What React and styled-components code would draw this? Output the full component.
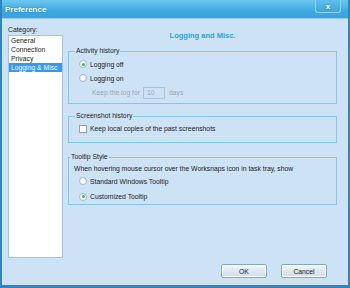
import React from "react";
import styled, { createGlobalStyle } from "styled-components";

const Global = createGlobalStyle`
  html, body { margin: 0; padding: 0; background: #ffffff; }
  body { font-family: "Liberation Sans", Arial, sans-serif; }
`;

const Window = styled.div`
  width: 350px;
  height: 288px;
  box-sizing: border-box;
  display: flex;
  flex-direction: column;
  background: #cde3f5;
  border-left: 2px solid #2f86bd;
  border-right: 2px solid #2f86bd;
  border-bottom: 3px solid #2f86bd;
  font-size: 6.8px;
  color: #1a1a1a;
`;

const TitleBar = styled.div`
  height: 18px;
  flex: none;
  display: flex;
  align-items: center;
  justify-content: space-between;
  padding: 0 7px 0 3px;
  background: linear-gradient(#6cc8f0, #3fa9df 60%, #39a3da);
  border-bottom: 1px solid #8fcdee;
`;

const Title = styled.span`
  color: #fff;
  font-weight: bold;
  font-size: 8px;
  text-shadow: 0 0 2px rgba(0, 60, 110, 0.6);
`;

const CloseButton = styled.div`
  width: 24px;
  height: 12px;
  margin-top: -5px;
  border: 1px solid #8fd3f3;
  border-top: none;
  border-radius: 0 0 3px 3px;
  background: linear-gradient(#5fc0ec, #3aa5dc);
  display: flex;
  align-items: center;
  justify-content: center;
  color: #fff;
  font-weight: bold;
  font-size: 8px;
  text-shadow: 0 0 2px rgba(0, 60, 110, 0.7);
`;

const Body = styled.div`
  flex: 1;
  display: grid;
  grid-template-columns: 55px 1fr;
  column-gap: 5px;
  padding: 6px 11px 6px 6px;
`;

const LeftCol = styled.div`
  display: flex;
  flex-direction: column;
`;

const Label = styled.div`
  height: 10px;
  line-height: 10px;
`;

const ListBox = styled.div`
  width: 55px;
  height: 223px;
  box-sizing: border-box;
  background: #fff;
  border: 1px solid #9bc8e8;
`;

const ListItem = styled.div`
  height: 9px;
  line-height: 9px;
  padding-left: 2px;
  background: ${(p) => (p.$selected ? "#3399f3" : "transparent")};
  color: ${(p) => (p.$selected ? "#fff" : "#1a1a1a")};
`;

const RightCol = styled.div`
  display: flex;
  flex-direction: column;
`;

const Heading = styled.div`
  text-align: center;
  color: #22a3e0;
  font-weight: bold;
  font-size: 7.5px;
  height: 10px;
  line-height: 10px;
  margin: 6px 0 6px;
`;

const Group = styled.fieldset`
  margin: 0 0 ${(p) => p.$gap || 0}px;
  padding: ${(p) => p.$pad || "2px 8px 4px 10px"};
  border: 1px solid #83c6ea;
  height: ${(p) => p.$h}px;
  box-sizing: border-box;
  min-width: 0;
`;

const Legend = styled.legend`
  padding: 0 1px;
  margin-left: -4px;
  line-height: 8px;
`;

const Row = styled.div`
  display: flex;
  align-items: center;
  height: ${(p) => p.$h || 14}px;
  color: ${(p) => (p.$muted ? "#9aa7b2" : "inherit")};
  padding-left: ${(p) => p.$indent || 0}px;
`;

const Radio = styled.span`
  width: 8px;
  height: 8px;
  border-radius: 50%;
  box-sizing: border-box;
  border: 1px solid #9fb8cc;
  background: radial-gradient(#ffffff 40%, #e8eef3);
  margin-right: 3px;
  display: flex;
  align-items: center;
  justify-content: center;
  &::after {
    content: "";
    width: 3px;
    height: 3px;
    border-radius: 50%;
    background: ${(p) => (p.$checked ? "#2fbf3a" : "transparent")};
  }
`;

const Check = styled.span`
  width: 8px;
  height: 8px;
  box-sizing: border-box;
  border: 1px solid #8aa3b8;
  background: #fff;
  margin-right: 3px;
`;

const Input = styled.span`
  width: 22px;
  height: 12px;
  box-sizing: border-box;
  border: 1px solid #a9c4da;
  background: #cde3f5;
  margin: 0 4px 0 3px;
  padding-left: 3px;
  line-height: 10px;
`;

const Footer = styled.div`
  margin-top: auto;
  display: flex;
  justify-content: flex-end;
  gap: 14px;
  padding-right: 10px;
  margin-bottom: 1px;
`;

const Button = styled.div`
  width: 46px;
  height: 14px;
  box-sizing: border-box;
  border: 1px solid #7fa9c8;
  border-radius: 2px;
  background: linear-gradient(#f4f8fb, #dce8f2 50%, #cddeec);
  display: flex;
  align-items: center;
  justify-content: center;
  box-shadow: inset 0 0 0 1px #fff;
`;

export default function App() {
  return (
    <>
      <Global />
      <Window>
        <TitleBar>
          <Title>Preference</Title>
          <CloseButton>x</CloseButton>
        </TitleBar>
        <Body>
          <LeftCol>
            <Label>Category:</Label>
            <ListBox>
              <ListItem>General</ListItem>
              <ListItem>Connection</ListItem>
              <ListItem>Privacy</ListItem>
              <ListItem $selected>Logging &amp; Misc</ListItem>
            </ListBox>
          </LeftCol>
          <RightCol>
            <Heading>Logging and Misc.</Heading>
            <Group $h={57} $gap={8}>
              <Legend>Activity history</Legend>
              <Row $h={14}>
                <Radio $checked />
                Logging off
              </Row>
              <Row $h={14}>
                <Radio />
                Logging on
              </Row>
              <Row $h={15} $muted $indent={13}>
                Keep the log for
                <Input>10</Input>
                days
              </Row>
            </Group>
            <Group $h={31} $gap={10}>
              <Legend>Screenshot history</Legend>
              <Row $h={13}>
                <Check />
                Keep local copies of the past screenshots
              </Row>
            </Group>
            <Group $h={52} $pad="2px 8px 4px 5px">
              <Legend>Tooltip Style</Legend>
              <Row $h={10}>
                When hovering mouse cursor over the Worksnaps icon in task tray, show
              </Row>
              <Row $h={16} $indent={5}>
                <Radio />
                Standard Windows Tooltip
              </Row>
              <Row $h={15} $indent={5}>
                <Radio $checked />
                Customized Tooltip
              </Row>
            </Group>
            <Footer>
              <Button>OK</Button>
              <Button>Cancel</Button>
            </Footer>
          </RightCol>
        </Body>
      </Window>
    </>
  );
}
